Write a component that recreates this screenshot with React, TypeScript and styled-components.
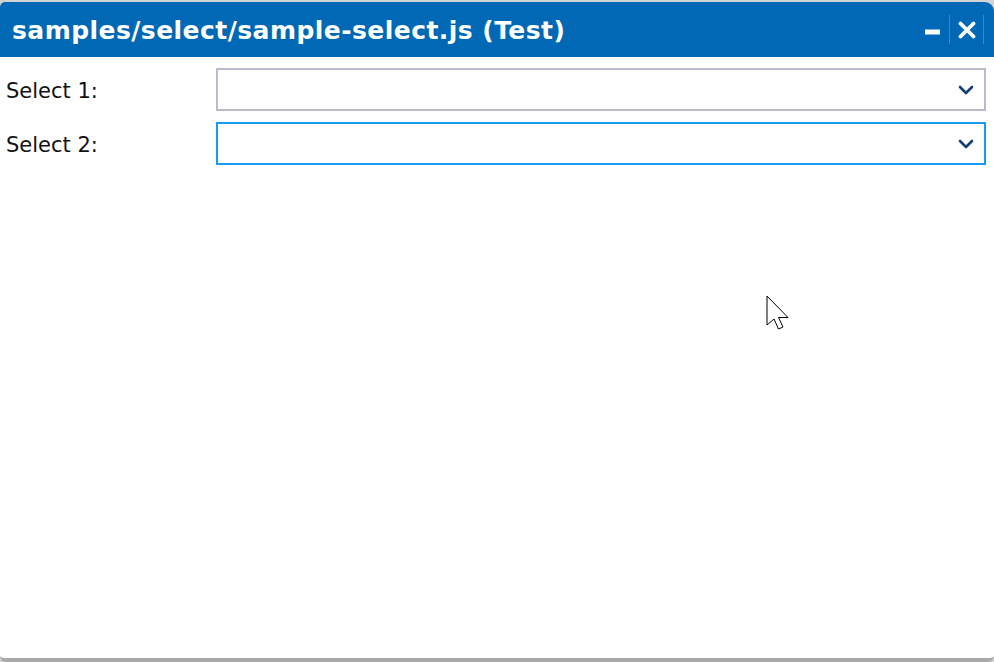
import React from 'react';
import styled, { createGlobalStyle } from 'styled-components';

const GlobalStyle = createGlobalStyle`
  html, body {
    margin: 0;
    padding: 0;
    background-color: #d2d2d2;
  }
  body {
    height: 662px;
    overflow: hidden;
    font-family: "DejaVu Sans", Verdana, sans-serif;
  }
`

const Frame = styled.div`
  position: relative;
  margin-top: 2px;
  height: 656px;
  display: flex;
  flex-direction: column;
  background-color: #fefefe;
  border-bottom: 4px solid #a9a9a9;
  border-radius: 5px 9px 6px 6px;
  overflow: hidden;
`

const TitleBar = styled.div`
  height: 55px;
  flex-shrink: 0;
  display: flex;
  align-items: center;
  padding-left: 12px;
  padding-right: 10px;
  background-color: #0068b4;
`

const Title = styled.div`
  flex: 1;
  color: #fff;
  font-size: 25px;
  font-weight: bold;
  letter-spacing: 0.45px;
  padding-top: 1px;
`

const Controls = styled.div`
  display: flex;
  align-items: stretch;
  height: 29px;
`

const ControlButton = styled.div<{ $divider?: boolean }>`
  width: 33px;
  display: flex;
  align-items: center;
  justify-content: center;
  border-left: ${p => (p.$divider ? '1px solid rgba(255, 255, 255, 0.22)' : '1px solid transparent')};
  border-right: ${p => (p.$divider ? '1px solid rgba(255, 255, 255, 0.22)' : '0')};
`

const MinimizeIcon = styled.svg`
  margin-top: 5px;
`

const Form = styled.div`
  display: flex;
  flex-direction: column;
  gap: 11px;
  padding: 11px 8px 0 6px;
`

const Row = styled.div`
  display: grid;
  grid-template-columns: 210px 1fr;
  align-items: center;
`

const Label = styled.label`
  font-size: 21px;
  color: #111;
  padding-top: 2px;
`

const SelectBox = styled.div<{ $focused?: boolean }>`
  height: 39px;
  border: 2px solid ${p => (p.$focused ? '#1a9bf2' : '#bbb9ca')};
  background-color: #fff;
  display: flex;
  align-items: center;
  justify-content: flex-end;
  padding-right: 10px;
`

const Cursor = styled.svg`
  position: absolute;
  left: 766px;
  top: 293px;
`

const Chevron = () => (
  <svg width="16" height="10" viewBox="0 0 16 10">
    <path d="M2 2 L8 8 L14 2" fill="none" stroke="#163e70" strokeWidth="2.6" strokeLinecap="round" strokeLinejoin="round" />
  </svg>
)

const selects = [
  { id: 's1', label: 'Select 1:', focused: false },
  { id: 's2', label: 'Select 2:', focused: true },
]

export default function App() {
  return (
    <>
      <GlobalStyle />
      <Frame>
        <TitleBar>
          <Title>samples/select/sample-select.js (Test)</Title>
          <Controls>
            <ControlButton>
              <MinimizeIcon width="15" height="6" viewBox="0 0 15 6">
                <rect x="0" y="0.5" width="15" height="5" fill="#fff" />
              </MinimizeIcon>
            </ControlButton>
            <ControlButton $divider>
              <svg width="18" height="18" viewBox="0 0 18 18">
                <path d="M2.5 2.5 L15.5 15.5 M15.5 2.5 L2.5 15.5" stroke="#fff" strokeWidth="3.8" strokeLinecap="round" />
              </svg>
            </ControlButton>
          </Controls>
        </TitleBar>
        <Form>
          {selects.map(s => (
            <Row key={s.id}>
              <Label>{s.label}</Label>
              <SelectBox $focused={s.focused}>
                <Chevron />
              </SelectBox>
            </Row>
          ))}
        </Form>
        <Cursor width="28" height="42" viewBox="0 0 28 42">
          <path d="M1 1 L1 30 L8 24 L12.5 34 L17 32 L12.5 22.5 L22 22.5 Z" fill="#fff" stroke="#000" strokeWidth="1" strokeLinejoin="miter" />
        </Cursor>
      </Frame>
    </>
  )
}
